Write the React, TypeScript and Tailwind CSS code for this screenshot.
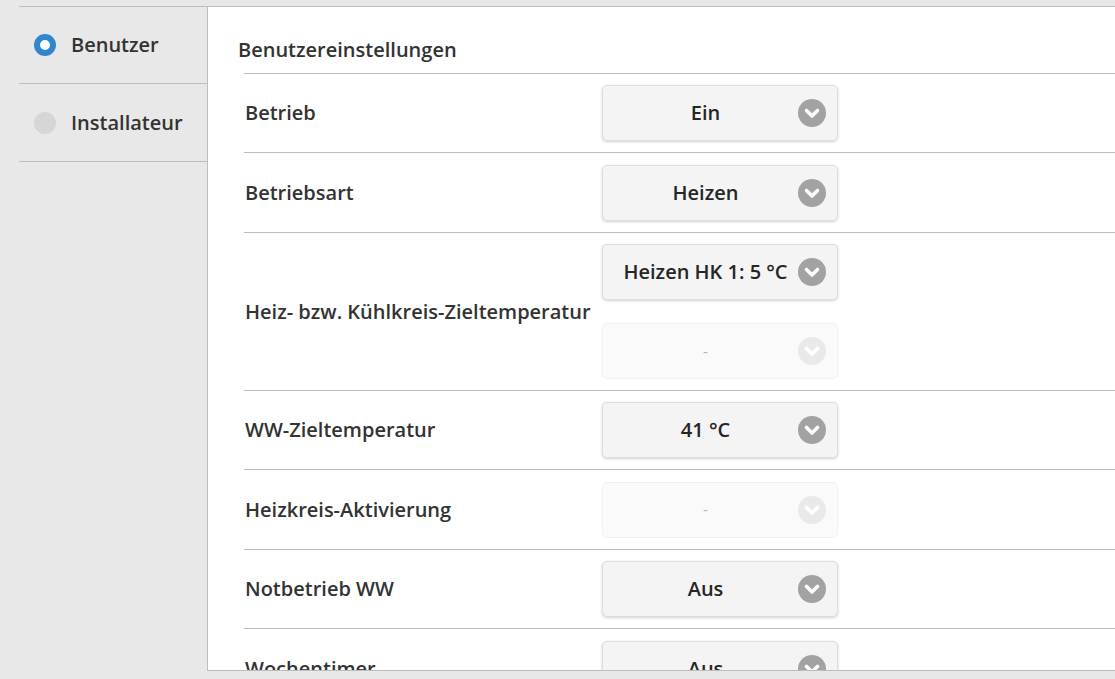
import React from "react";

type Row = {
  label: string;
  tall?: boolean;
  values: { text: string; disabled?: boolean }[];
};

const rows: Row[] = [
  { label: "Betrieb", values: [{ text: "Ein" }] },
  { label: "Betriebsart", tall: true, values: [{ text: "Heizen" }] },
  {
    label: "Heiz- bzw. Kühlkreis-Zieltemperatur",
    values: [{ text: "Heizen HK 1: 5 °C" }, { text: "-", disabled: true }],
  },
  { label: "WW-Zieltemperatur", values: [{ text: "41 °C" }] },
  { label: "Heizkreis-Aktivierung", tall: true, values: [{ text: "-", disabled: true }] },
  { label: "Notbetrieb WW", values: [{ text: "Aus" }] },
  { label: "Wochentimer", tall: true, values: [{ text: "Aus" }] },
];

function Chevron({ disabled }: { disabled?: boolean }) {
  return (
    <svg width="28" height="28" viewBox="0 0 28 28" className="shrink-0">
      <circle cx="14" cy="14" r="14" fill={disabled ? "#e9e9e9" : "#a2a2a2"} />
      <path
        d="M8.5 11.5 L14 17 L19.5 11.5"
        fill="none"
        stroke="#ffffff"
        strokeWidth="3.6"
        strokeLinecap="round"
        strokeLinejoin="round"
      />
    </svg>
  );
}

function SelectBox({ text, disabled }: { text: string; disabled?: boolean }) {
  return (
    <div
      className={
        disabled
          ? "flex h-[56px] w-[236px] items-center rounded-[5px] border border-[#f1f1f1] bg-[#fafafa] pr-[11px]"
          : "flex h-[56px] w-[236px] items-center rounded-[5px] border border-[#dedede] bg-[#f4f4f4] pr-[11px] shadow-[0_1px_3px_rgba(0,0,0,0.18)]"
      }
    >
      <span
        className={
          disabled
            ? "flex-1 whitespace-nowrap pl-[10px] text-center text-[15px] text-[#b5b5b5]"
            : "flex-1 whitespace-nowrap pl-[10px] text-center text-[20px] font-semibold text-[#262626]"
        }
      >
        {text}
      </span>
      <Chevron disabled={disabled} />
    </div>
  );
}

function SideItem({ label, active, tall }: { label: string; active?: boolean; tall?: boolean }) {
  return (
    <div
      className={
        tall
          ? "flex h-[78px] items-center border-b border-[#bdbdbd] pl-[15px]"
          : "flex h-[77px] items-center border-b border-[#bdbdbd] pl-[15px]"
      }
    >
      {active ? (
        <span className="h-[22px] w-[22px] rounded-full border-[6px] border-[#2f87d0] bg-white" />
      ) : (
        <span className="h-[22px] w-[22px] rounded-full bg-[#d6d6d6]" />
      )}
      <span className="ml-[15px] text-[20px] font-semibold text-[#333333]">{label}</span>
    </div>
  );
}

export default function App() {
  return (
    <div
      className="flex h-[679px] w-[1115px] overflow-hidden bg-[#e8e8e8] pt-[6px]"
      style={{ fontFamily: '"Open Sans", "Noto Sans", sans-serif' }}
    >
      <aside className="w-[207px] shrink-0 pl-[19px]">
        <div className="border-t border-[#bdbdbd]">
          <SideItem label="Benutzer" active />
          <SideItem label="Installateur" tall />
        </div>
      </aside>

      <main className="h-[665px] flex-1 overflow-hidden border-b border-l border-t border-[#bdbdbd] bg-white">
        <h2 className="pb-[11px] pl-[30px] pt-[30px] text-[20px] font-semibold leading-[25px] text-[#333333]">
          Benutzereinstellungen
        </h2>
        <div className="ml-[36px] border-t border-[#bdbdbd]">
          {rows.map((row) => (
            <div
              key={row.label}
              className={
                row.tall
                  ? "flex min-h-[80px] items-center border-b border-[#bdbdbd]"
                  : "flex min-h-[79px] items-center border-b border-[#bdbdbd]"
              }
            >
              <div className="w-[358px] shrink-0 pl-[1px] text-[20px] font-semibold text-[#333333]">
                {row.label}
              </div>
              <div className="flex flex-col gap-[23px] py-[11px]">
                {row.values.map((v, i) => (
                  <SelectBox key={i} text={v.text} disabled={v.disabled} />
                ))}
              </div>
            </div>
          ))}
        </div>
      </main>
    </div>
  );
}
